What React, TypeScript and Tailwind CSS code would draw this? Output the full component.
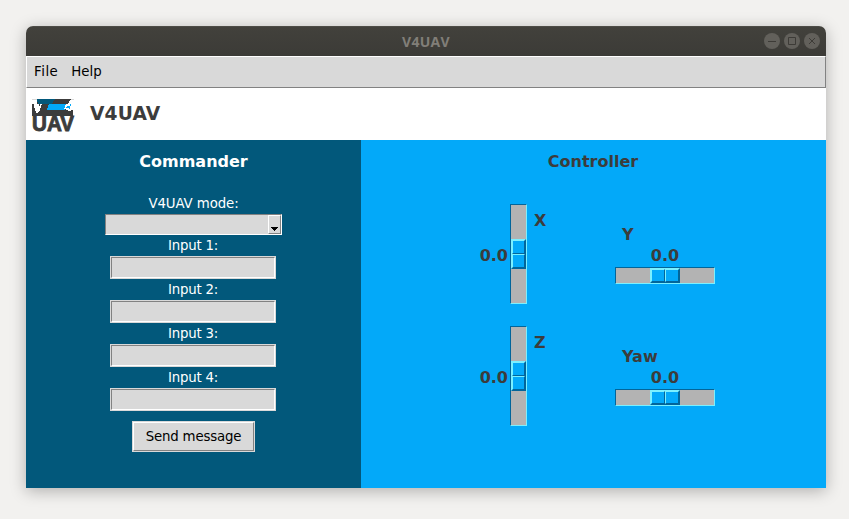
import React from "react";

const DEJAVU = "font-['DejaVu_Sans',sans-serif]";

function Logo() {
  return (
    <svg width="44" height="36" viewBox="0 0 44 36" className="block overflow-visible" fontFamily="Liberation Sans, sans-serif" fontWeight="700">
      <g shapeRendering="crispEdges">
        <path d="M0 0H42V1H0Z" fill="#d9d9d9" />
        <path d="M5 0H39L36 5H34V11H41V17H1V9L5 5Z" fill="#3c3c3c" />
        <path d="M5 0H23L20 5H6Z" fill="#02587b" />
        <path d="M17 5H34L33 11H15Z" fill="#03a9f9" />
        <path d="M0 5H7V9L8 5H10L8 11L6 14H4L2 11H0Z" fill="#fff" />
        <path d="M0 5H2V9H3V12H4V15H5V17H0Z" fill="#3c3c3c" />
        <path d="M34 5H39V12H36V10H32Z" fill="#fff" />
        <path d="M35 7H37V9H34V8H35Z" fill="#03a9f9" />
        <path d="M38 5H39L38 10H37Z" fill="#03a9f9" />
      </g>
      <text x="0" y="31.5" fontSize="21.5" textLength="42" lengthAdjust="spacingAndGlyphs" fill="#3c3c3c" stroke="#3c3c3c" strokeWidth="0.9">UAV</text>
    </svg>
  );
}

function Entry({ label }: { label: string }) {
  return (
    <label className="flex flex-col items-center">
      <span className="flex h-[21px] items-center pt-px pl-px text-[13.33px] leading-none tracking-[-0.2px] text-white">{label}</span>
      <span className="block h-[23px] w-[166px] border border-[#d9d9d9]">
        <span className="block h-full border border-t-[#828282] border-l-[#828282] border-r-white border-b-white bg-[#d9d9d9]" />
      </span>
    </label>
  );
}

function Knob({ vertical }: { vertical?: boolean }) {
  const half = "flex-1 border-t border-l border-t-[#7bf0ff] border-l-[#7bf0ff] border-r border-b border-r-[#02659a] border-b-[#02659a] bg-[#03a9f9]";
  return (
    <div className={`flex border border-t-[#7bf0ff] border-l-[#7bf0ff] border-r-[#02659a] border-b-[#02659a] ${vertical ? "h-[30px] w-[15px] flex-col" : "h-[15px] w-[30px]"}`}>
      <div className={half} />
      <div className={half} />
    </div>
  );
}

function VerticalScale({ name }: { name: string }) {
  return (
    <div className="flex h-[100px]">
      <div className="flex w-[30px] items-center justify-end pt-[4px] pr-[2px] text-base leading-none">0.0</div>
      <div className="flex w-[17px] items-center border border-t-[#02659a] border-l-[#02659a] border-r-[#7bf0ff] border-b-[#7bf0ff] bg-[#b3b3b3]">
        <Knob vertical />
      </div>
      <div className="pt-[9px] pl-[7px] text-base leading-none">{name}</div>
    </div>
  );
}

function HorizontalScale({ name }: { name: string }) {
  return (
    <div className="w-[100px] pt-[23px]">
      <div className="h-[21px] pl-[7px] text-base leading-none">{name}</div>
      <div className="h-[19px] text-center text-base leading-none">0.0</div>
      <div className="flex h-[17px] justify-center border border-t-[#02659a] border-l-[#02659a] border-r-[#7bf0ff] border-b-[#7bf0ff] bg-[#b3b3b3]">
        <Knob />
      </div>
    </div>
  );
}

function WindowButton({ children }: { children: React.ReactNode }) {
  return (
    <svg width="16" height="16" viewBox="0 0 16 16" fill="none" stroke="#3d3b37" strokeWidth="1">
      <circle cx="8" cy="8" r="8" fill="#62605b" stroke="none" />
      {children}
    </svg>
  );
}

export default function App() {
  return (
    <div className={`h-[519px] w-[849px] bg-[#f2f1ef] p-[26px] pr-[23px] ${DEJAVU}`}>
      <div className="flex h-[462px] w-[800px] flex-col overflow-hidden rounded-t-[7px] shadow-[0_3px_16px_rgba(0,0,0,0.28)]">
        <header className="grid h-[30px] shrink-0 grid-cols-[1fr_auto_1fr] items-center border-t border-[#4d4c47] bg-linear-to-b from-[#42413c] to-[#3c3b37] pb-px">
          <span />
          <span className="pt-px text-[14px] leading-none font-bold tracking-[0.3px] text-[#817e78] font-['Open_Sans',sans-serif]">V4UAV</span>
          <span className="flex justify-end gap-1 pr-[6px]">
            <WindowButton><path d="M4 8.5H12" /></WindowButton>
            <WindowButton><path d="M4.5 4.5H11.5V11.5H4.5Z" /></WindowButton>
            <WindowButton><path d="M5 5L11 11M11 5L5 11" /></WindowButton>
          </span>
        </header>
        <nav className="flex h-8 shrink-0 items-center gap-[13px] border border-t-white border-l-white border-r-[#828282] border-b-[#828282] bg-[#d9d9d9] pl-[7px] text-[13.33px] leading-none text-black">
          <span className="tracking-[0.5px]">File</span>
          <span>Help</span>
        </nav>
        <div className="flex h-[52px] shrink-0 bg-white pt-[11px] pl-[6px] text-[#3c3c3c]">
          <Logo />
          <h1 className="pt-[6px] pl-[14px] text-[18.67px] leading-none font-bold tracking-[0.15px]">V4UAV</h1>
        </div>
        <main className="flex flex-1">
          <section className="flex w-[335px] flex-col items-center bg-[#02587b] pt-[14px]">
            <h2 className="h-10 text-base leading-none font-bold text-white">Commander</h2>
            <div className="flex h-5 items-center pb-px text-[13.33px] leading-none tracking-[-0.1px] text-white">V4UAV mode:</div>
            <div className="flex h-[21px] w-[177px] justify-end border border-t-[#828282] border-l-[#828282] border-r-white border-b-white bg-[#d9d9d9]">
              <div className="flex w-[13px] items-end justify-center border border-t-white border-l-white border-r-[#828282] border-b-[#828282] pb-[2px]">
                <svg width="7" height="4" viewBox="0 0 7 4" shapeRendering="crispEdges"><path d="M0 0H7V1H6V2H5V3H4V4H3V3H2V2H1V1H0Z" /></svg>
              </div>
            </div>
            <div className="pr-[2px]">
              <Entry label="Input 1:" />
              <Entry label="Input 2:" />
              <Entry label="Input 3:" />
              <Entry label="Input 4:" />
            </div>
            <button className="mt-[10px] h-[31px] w-[123px] border border-[#d9d9d9] text-[13.33px] leading-none tracking-[-0.17px] text-black">
              <span className="flex h-full items-center justify-center border border-t-white border-l-white border-r-[#828282] border-b-[#828282] bg-[#d9d9d9]">Send message</span>
            </button>
          </section>
          <section className="flex-1 bg-[#03a9f9] pt-[14px] font-bold text-[#3c3c3c]">
            <h2 className="h-[50px] pr-px text-center text-base leading-none">Controller</h2>
            <div className="grid grid-cols-[135px_100px] gap-y-[22px] pl-[119px]">
              <VerticalScale name="X" />
              <HorizontalScale name="Y" />
              <VerticalScale name="Z" />
              <HorizontalScale name="Yaw" />
            </div>
          </section>
        </main>
      </div>
    </div>
  );
}
